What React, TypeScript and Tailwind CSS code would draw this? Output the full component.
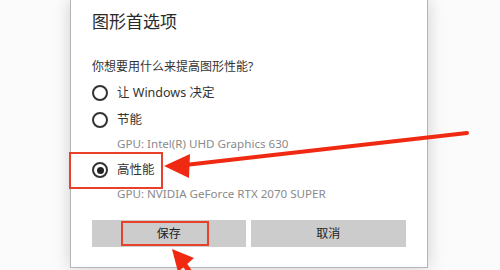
import React from "react";

const font = { fontFamily: '"Noto Sans", "Noto Sans CJK SC", sans-serif' };

function Radio({ checked }: { checked?: boolean }) {
  return (
    <div className="w-[16px] h-[16px] rounded-full border-[2px] border-[#333] flex items-center justify-center shrink-0">
      {checked && <div className="w-[7px] h-[7px] rounded-full bg-[#222]" />}
    </div>
  );
}

export default function App() {
  return (
    <div className="w-[500px] h-[270px] overflow-hidden bg-[#fbfbfb] relative" style={font}>
      <div className="ml-[70px] w-[358px] h-[268px] bg-white border border-[#b5b5b5] border-t-0 shadow-[0_0_16px_rgba(0,0,0,0.18)] pl-[21px] pr-[21px] flex flex-col">
        <div className="mt-[10px] text-[17px] leading-[24px] text-[#2a2a2a]">图形首选项</div>
        <div className="mt-[25px] text-[12px] leading-[16px] text-[#333]">你想要用什么来提高图形性能?</div>
        <div className="mt-[9px] flex items-center gap-[9px] h-[18px]">
          <Radio />
          <span className="text-[12.5px] text-[#333]">让 Windows 决定</span>
        </div>
        <div className="mt-[9px] flex items-center gap-[9px] h-[18px]">
          <Radio />
          <span className="text-[12.5px] text-[#333]">节能</span>
        </div>
        <div className="mt-[7px] pl-[25px] text-[11.6px] leading-[16px] text-[#8a8a8a]">GPU: Intel(R) UHD Graphics 630</div>
        <div className="mt-[9px] flex items-center gap-[9px] h-[18px]">
          <Radio checked />
          <span className="text-[12.5px] text-[#333]">高性能</span>
        </div>
        <div className="mt-[7px] pl-[25px] text-[11.6px] leading-[16px] text-[#8a8a8a]">GPU: NVIDIA GeForce RTX 2070 SUPER</div>
        <div className="mt-[18px] flex gap-[5px]">
          <div className="w-[154px] h-[27px] bg-[#cccccc] flex items-center justify-center text-[12px] text-[#222]">保存</div>
          <div className="w-[156px] h-[27px] bg-[#cccccc] flex items-center justify-center text-[12px] text-[#222]">取消</div>
        </div>
      </div>

      <div className="absolute left-[69px] top-[152px] w-[94px] h-[37px] border-[2px] border-[#e8402a]" />
      <div className="absolute left-[121px] top-[221px] w-[88px] h-[25px] border-[2px] border-[#e8402a]" />

      <svg className="absolute left-0 top-0" width="500" height="270" viewBox="0 0 500 270">
        <line x1="467" y1="133" x2="185" y2="165" stroke="#f02a12" strokeWidth="4" strokeLinecap="round" />
        <polygon points="164,166 190,154 189,178" fill="#f02a12" />
        <line x1="192" y1="275" x2="180" y2="258" stroke="#f02a12" strokeWidth="5" />
        <polygon points="172,249 194,258 178,272" fill="#f02a12" />
      </svg>
    </div>
  );
}
